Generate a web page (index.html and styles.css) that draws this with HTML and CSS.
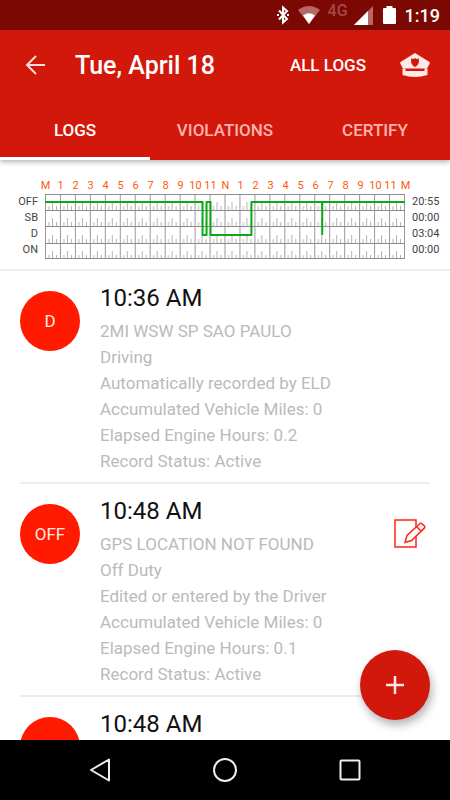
FILE: index.html
```html
<!DOCTYPE html>
<html lang="en">
<head>
<meta charset="utf-8">
<meta name="viewport" content="width=device-width, initial-scale=1">
<title>Driver logs</title>
<link rel="stylesheet" href="styles.css">
</head>
<body>
<div class="status-bar">
  <svg width="14" height="20" viewBox="0 0 14 20" fill="none" stroke="#fff" stroke-width="2"><path d="M3 5.500 11 14 7 17.500V2.500L11 6 3 14.500"/><path d="M1 10h2M11 10h2"/></svg>
  <svg class="wifi" width="22" height="18" viewBox="0 0 22 18"><path d="M0 4Q11-4 22 4L11 18Z" fill="#b56866"/><path d="M5 9.500Q11 5 17 9.500L11 18Z" fill="#fff"/></svg>
  <span class="network">4G</span>
  <svg class="signal" width="19" height="19" viewBox="0 0 19 19"><path d="M0 19 19 0V19Z" fill="#b56866"/><path d="M0 19 14 5V19Z" fill="#fff"/></svg>
  <svg class="battery" width="13" height="18" viewBox="0 0 13 18" fill="#fff"><path d="M3.500 0h6v2H12a1 1 0 0 1 1 1v14a1 1 0 0 1-1 1H1a1 1 0 0 1-1-1V3a1 1 0 0 1 1-1h2.500z"/></svg>
  <span class="clock">1:19</span>
</div>
<header class="app-header">
  <div class="toolbar">
    <button class="icon-button back" type="button" aria-label="Back"><svg width="20" height="20" viewBox="0 0 20 20" fill="none" stroke="#ffdcda" stroke-width="2"><path d="M20 10H2M11 1 2 10l9 9"/></svg></button>
    <h1 class="title">Tue, April 18</h1>
    <button class="all-logs" type="button">ALL LOGS</button>
    <button class="icon-button" type="button" aria-label="Officer view"><svg width="30" height="25" viewBox="0 0 30 25"><path fill="#ffe9e8" fill-rule="evenodd" d="M15 0 29.500 9Q30 10 29.500 11L27 15.500H3L.5 11Q0 10 .5 9ZM15 5l-1.500 1-2.500-.5q.5 1.500 0 3Q11.500 12 15 14q3.500-2 4-5.500-.5-1.500 0-3L16.500 6Z"/><path fill="#ffe9e8" d="M2.500 15.500h3V18h19v-2.500h3V22Q15 26 2.500 22Z"/></svg></button>
  </div>
  <nav class="tabs">
    <a class="tab tab-active" href="#logs" aria-current="page">LOGS</a>
    <a class="tab" href="#violations">VIOLATIONS</a>
    <a class="tab" href="#certify">CERTIFY</a>
  </nav>
</header>
<main class="content" id="logs">
  <section class="chart" aria-label="Hours of service">
    <div class="hours"><span>M</span><span>1</span><span>2</span><span>3</span><span>4</span><span>5</span><span>6</span><span>7</span><span>8</span><span>9</span><span>10</span><span>11</span><span>N</span><span>1</span><span>2</span><span>3</span><span>4</span><span>5</span><span>6</span><span>7</span><span>8</span><span>9</span><span>10</span><span>11</span><span>M</span></div>
    <div class="graph">
      <div class="labels labels-left"><span>OFF</span><span>SB</span><span>D</span><span>ON</span></div>
      <svg class="plot" viewBox="0 0 361 66" preserveAspectRatio="none">
        <defs>
          <pattern id="hour" width="15" height="16" patternUnits="userSpaceOnUse">
            <path d="M0 0h1v16H0z" fill="#999"/>
            <path d="M3 12h2v4H3z" fill="#dadada"/>
            <path d="M7 8h1v8H7zM11 12h1v4h-1z" fill="#b4b4b4"/>
          </pattern>
        </defs>
        <path d="M0 0h361v16H0z" fill="url(#hour)"/>
        <path d="M0 0h361v16H0z" fill="url(#hour)" transform="translate(0 16)"/>
        <path d="M0 0h361v16H0z" fill="url(#hour)" transform="translate(0 33)"/>
        <path d="M0 0h361v16H0z" fill="url(#hour)" transform="translate(0 49)"/>
        <path d="M0 0h361v1H0zM0 16h361v1H0zM0 32h361v1H0zM0 49h361v1H0zM0 64h361v1H0z" fill="#8c8c8c"/>
        <path d="M0 8h158v33h4V8h4v33h41V8h154M278 8v33" fill="none" stroke="#0ba913" stroke-width="2" stroke-linejoin="round"/>
      </svg>
      <div class="labels"><span>20:55</span><span>00:00</span><span>03:04</span><span>00:00</span></div>
    </div>
  </section>
  <ul class="events">
    <li class="event">
      <span class="badge">D</span>
      <div class="details">
        <h2 class="time">10:36 AM</h2>
        <p>2MI WSW SP SAO PAULO</p>
        <p>Driving</p>
        <p>Automatically recorded by ELD</p>
        <p>Accumulated Vehicle Miles: 0</p>
        <p>Elapsed Engine Hours: 0.2</p>
        <p>Record Status: Active</p>
      </div>
    </li>
    <li class="event">
      <span class="badge">OFF</span>
      <div class="details">
        <h2 class="time">10:48 AM</h2>
        <p>GPS LOCATION NOT FOUND</p>
        <p>Off Duty</p>
        <p>Edited or entered by the Driver</p>
        <p>Accumulated Vehicle Miles: 0</p>
        <p>Elapsed Engine Hours: 0.1</p>
        <p>Record Status: Active</p>
      </div>
      <button class="icon-button edit" type="button" aria-label="Edit log"><svg width="32" height="30" viewBox="0 0 32 30" fill="none" stroke="#ff2418" stroke-width="1.500"><path d="M22 9V1H1v27h21V17"/><path fill="#fff" d="M11 23.500l2-7L26 4.500q1-.6 2 .4l2.500 2.200q.8 1-.2 2L17.500 21.500ZM22.500 7.500l4.500 4.500"/></svg></button>
    </li>
    <li class="event">
      <span class="badge"></span>
      <div class="details">
        <h2 class="time">10:48 AM</h2>
      </div>
    </li>
  </ul>
  <button class="add" type="button" aria-label="Add log"><svg width="18" height="18" viewBox="0 0 18 18" stroke="#ffe9e8" stroke-width="2.500"><path d="M9 0v18M0 9h18"/></svg></button>
</main>
<nav class="system-nav">
  <button class="icon-button" type="button" aria-label="System back"><svg width="26" height="26" viewBox="0 0 26 26" fill="none" stroke="#eee" stroke-width="2" stroke-linejoin="round"><path d="M22 2.500v21L4 13Z"/></svg></button>
  <button class="icon-button" type="button" aria-label="Home"><svg width="26" height="26" viewBox="0 0 26 26" fill="none" stroke="#eee" stroke-width="2"><circle cx="13" cy="13" r="11"/></svg></button>
  <button class="icon-button" type="button" aria-label="Recent apps"><svg width="26" height="26" viewBox="0 0 26 26" fill="none" stroke="#eee" stroke-width="2"><rect x="3.500" y="3.500" width="19" height="19" rx="1"/></svg></button>
</nav>
</body>
</html>
```
FILE: styles.css
```css
* {
  box-sizing: border-box;
}

body {
  margin: 0;
  height: 100vh;
  display: flex;
  flex-direction: column;
  overflow: hidden;
  font-family: Roboto, "Liberation Sans", sans-serif;
  background: #fff;
  color: #111;
}

svg {
  display: block;
}

button {
  padding: 0;
  border: 0;
  background: none;
  font: inherit;
  color: inherit;
}

.icon-button {
  display: flex;
  align-items: center;
  justify-content: center;
}

.status-bar {
  flex: none;
  height: 30px;
  padding-right: 10px;
  display: flex;
  align-items: center;
  justify-content: flex-end;
  background: #7c0804;
  color: #fff;
}

.wifi {
  margin-left: 8px;
}

.network {
  margin-left: 8px;
  padding-bottom: 8px;
  font-size: 16px;
  line-height: 16px;
  font-weight: 500;
  color: #a54a47;
}

.signal {
  margin-left: 6px;
}

.battery {
  margin-left: 10px;
}

.clock {
  margin-left: 9px;
  font-size: 18px;
  font-weight: 500;
}

.app-header {
  position: relative;
  z-index: 1;
  flex: none;
  background: #d2180b;
  color: #fff;
  box-shadow: 0 2px 5px rgba(0, 0, 0, 0.3);
}

.toolbar {
  height: 70px;
  padding: 0 20px 0 25px;
  display: flex;
  align-items: center;
}

.title {
  flex: 1;
  margin: 0 0 0 30px;
  font-size: 25px;
  font-weight: 500;
}

.all-logs {
  margin-right: 34px;
  font-size: 17px;
  font-weight: 500;
}

.tabs {
  height: 60px;
  display: grid;
  grid-template-columns: repeat(3, 1fr);
}

.tab {
  display: flex;
  align-items: center;
  justify-content: center;
  border-top: 3px solid transparent;
  border-bottom: 3px solid transparent;
  font-size: 17px;
  font-weight: 500;
  text-decoration: none;
  color: #ffb3ae;
}

.tab-active {
  color: #fff;
  border-bottom-color: #fff;
}

.content {
  position: relative;
  flex: 1;
  min-height: 0;
  overflow: hidden;
}

.chart {
  height: 111px;
  padding-top: 17px;
  border-bottom: 2px solid #eee;
}

.hours {
  padding: 0 37px 0 38px;
  display: grid;
  grid-template-columns: repeat(25, minmax(0, 1fr));
  font-size: 11px;
  line-height: 17px;
  color: #ff5a0a;
}

.hours span {
  display: flex;
  justify-content: center;
}

.graph {
  display: grid;
  grid-template-columns: 45px 1fr 45px;
}

.labels {
  padding-left: 7px;
  font-size: 11px;
  line-height: 16px;
  color: #444;
}

.labels span {
  display: block;
}

.labels-left {
  padding: 0 7px 0 0;
  text-align: right;
}

.plot {
  width: 100%;
  height: 66px;
}

.events {
  margin: 0;
  padding: 0 20px;
  list-style: none;
}

.event {
  min-height: 213px;
  padding: 12px 0 8px;
  display: flex;
  align-items: flex-start;
  border-bottom: 2px solid #eee;
}

.badge {
  flex: none;
  width: 60px;
  height: 60px;
  margin: 8px 20px 0 0;
  display: flex;
  align-items: center;
  justify-content: center;
  border-radius: 50%;
  background: #ff1a00;
  color: #ffe9e8;
  font-size: 17px;
}

.details {
  flex: 1;
  font-size: 17px;
  line-height: 26px;
  color: #bababa;
}

.details p {
  margin: 0;
}

.time {
  margin: 0 0 5px;
  font-size: 24px;
  line-height: 30px;
  font-weight: 400;
  color: #111;
}

.edit {
  margin: 23px 4px 0 0;
}

.add {
  position: absolute;
  right: 20px;
  bottom: 20px;
  width: 70px;
  height: 70px;
  display: flex;
  align-items: center;
  justify-content: center;
  border-radius: 50%;
  background: #d2180b;
  box-shadow: 2px 5px 10px rgba(0, 0, 0, 0.3);
}

.system-nav {
  flex: none;
  height: 60px;
  padding: 0 37px;
  display: grid;
  grid-template-columns: repeat(3, 1fr);
  background: #000;
}
```
